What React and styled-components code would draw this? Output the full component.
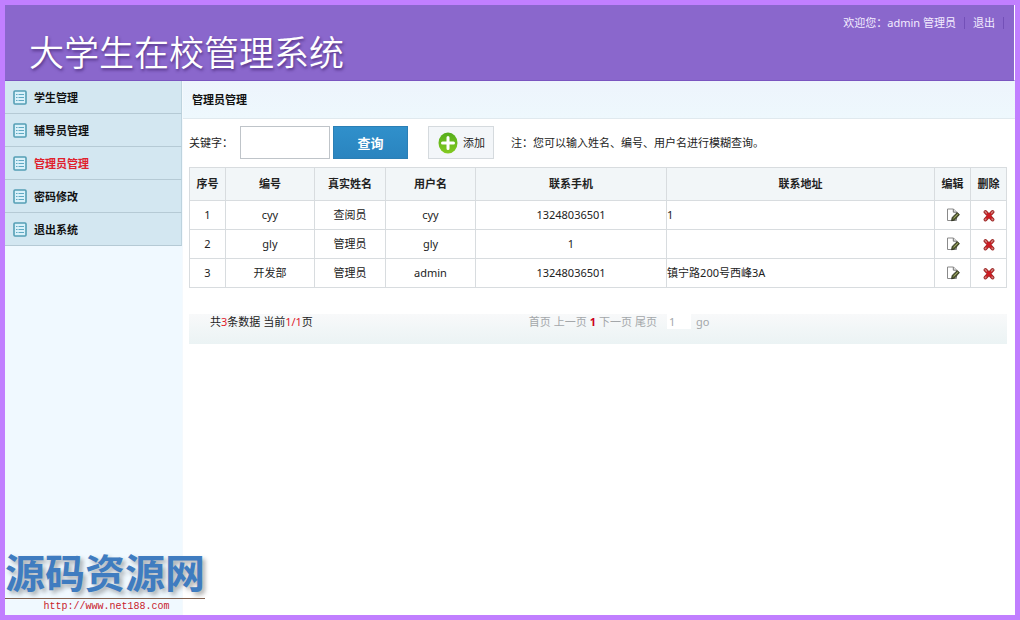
import { useState } from "react";
import styled, { createGlobalStyle } from "styled-components";

const GlobalStyle = createGlobalStyle`
	* {
		box-sizing: border-box;
	}

	body {
		margin: 0;
		background: #ffffff;
		color: #222222;
		font-family: "Noto Sans", "Noto Sans CJK SC", sans-serif;
		font-size: 11px;
		line-height: 16px;
	}

	button,
	input {
		font-family: inherit;
		font-size: inherit;
		line-height: inherit;
	}
`;

const Page = styled.div`
	position: relative;
	display: flex;
	flex-direction: column;
	min-height: 100vh;
	border: 5px solid #c17fff;
`;

const Header = styled.header`
	display: flex;
	justify-content: space-between;
	align-items: flex-start;
	height: 76px;
	padding: 12px 10px 0 24px;
	background: #8a67cc;
	border-right: 1px solid #ffffff;
	border-bottom: 1px solid #7a55c0;
`;

const SiteTitle = styled.h1`
	margin: 8px 0 0;
	color: #ffffff;
	font-family: "Noto Sans CJK SC", sans-serif;
	font-size: 35px;
	font-weight: 350;
	line-height: 52px;
	text-shadow: 1px 2px 3px rgba(50, 20, 90, 0.6);
	white-space: nowrap;
`;

const UserBar = styled.div`
	display: flex;
	align-items: center;
	color: #f3ecff;
	white-space: nowrap;
`;

const UserItem = styled.span`
	padding: 0 8px;
	border-right: 1px solid #7350b8;
	line-height: 12px;

	a {
		color: inherit;
		text-decoration: none;
	}
`;

const Body = styled.div`
	display: flex;
	flex: 1;
`;

const Sidebar = styled.nav`
	flex: 0 0 178px;
	background: #f0f9ff;
	border-right: 1px solid #f4f9fd;
`;

const MenuLink = styled.a`
	display: flex;
	align-items: center;
	gap: 7px;
	height: 33px;
	padding: 1px 8px 0;
	background: #d3e7f1;
	border-right: 1px solid #bdd3de;
	border-bottom: 1px solid #b5cad5;
	color: ${({ $active }) => ($active ? "#e0202c" : "#111111")};
	font-weight: bold;
	text-decoration: none;
`;

const Main = styled.main`
	flex: 1;
	min-width: 0;
`;

const PageTitle = styled.h2`
	margin: 0;
	padding: 11px 9px 10px;
	background: linear-gradient(#edf4fc, #eef8fd);
	border-bottom: 1px solid #e0e9ee;
	color: #111111;
	font-size: 11px;
	font-weight: bold;
`;

const Content = styled.div`
	padding: 7px 8px 0 6px;
`;

const SearchForm = styled.form`
	display: flex;
	align-items: center;
	margin-bottom: 8px;
	white-space: nowrap;

	label {
		width: 51px;
	}
`;

const Keyword = styled.input`
	width: 90px;
	height: 33px;
	margin-right: 3px;
	padding: 0 6px;
	background: #ffffff;
	border: 1px solid #bfc4c9;
	border-radius: 0;
`;

const SearchButton = styled.button`
	width: 75px;
	height: 33px;
	margin-right: 20px;
	padding: 0;
	background: linear-gradient(#3090cb, #2a84bf);
	border: 1px solid #2b7fb5;
	color: #ffffff;
	font-size: 13px;
	font-weight: bold;
`;

const AddButton = styled.button`
	display: flex;
	align-items: center;
	gap: 5px;
	height: 33px;
	margin-right: 17px;
	padding: 0 8px 0 9px;
	background: #f3f6f9;
	border: 1px solid #d5dade;
	color: #222222;
`;

const Table = styled.table`
	width: 100%;
	border-collapse: collapse;
	table-layout: fixed;

	th,
	td {
		height: 29px;
		padding: 0;
		border: 1px solid #d8dcdf;
		text-align: center;
	}

	th {
		height: 33px;
		background: #f2f6f8;
		color: #222222;
		font-weight: bold;
	}

	td.address {
		text-align: left;
	}
`;

const IconButton = styled.button`
	display: block;
	margin: 0 auto;
	padding: 0;
	background: none;
	border: 0;

	svg {
		display: block;
	}
`;

const PagerBar = styled.div`
	display: flex;
	align-items: flex-start;
	height: 30px;
	margin-top: 26px;
	padding-left: 21px;
	background: linear-gradient(#f8f9fa, #ebf3f4);
	white-space: nowrap;
`;

const Summary = styled.div`
	flex: 0 0 40%;

	em {
		color: #e0202c;
		font-style: normal;
	}
`;

const Pager = styled.form`
	display: flex;
	gap: 3px;
	color: #a3a7aa;

	a {
		color: inherit;
		text-decoration: none;
	}

	strong {
		color: #cc0022;
	}

	input {
		width: 24px;
		height: 15px;
		margin: 0 2px 0 7px;
		padding: 0 2px;
		background: #ffffff;
		border: 0;
		color: inherit;
	}

	button {
		padding: 0;
		background: none;
		border: 0;
		color: inherit;
	}
`;

const Watermark = styled.div`
	position: absolute;
	bottom: 0;
	left: 0;
	width: 200px;
	text-align: center;
`;

const WatermarkName = styled.div`
	padding-bottom: 4px;
	border-bottom: 1px solid #80604f;
	color: #3f7cc0;
	font-family: "Noto Sans CJK SC", sans-serif;
	font-size: 40px;
	font-weight: bold;
	line-height: 46px;
	text-shadow: 3px 3px 4px rgba(60, 60, 60, 0.4);
	white-space: nowrap;
`;

const WatermarkUrl = styled.a`
	display: block;
	padding-left: 3px;
	color: #c8202c;
	font-family: "Liberation Mono", monospace;
	font-size: 10px;
	line-height: 16px;
	text-decoration: none;
`;

const menu = ["学生管理", "辅导员管理", "管理员管理", "密码修改", "退出系统"];

const columns = [
	{ title: "序号", width: "4.4%" },
	{ title: "编号", width: "10.9%" },
	{ title: "真实姓名", width: "8.7%" },
	{ title: "用户名", width: "11%" },
	{ title: "联系手机", width: "23.4%" },
	{ title: "联系地址", width: "32.8%" },
	{ title: "编辑", width: "4.4%" },
	{ title: "删除", width: "4.4%" },
];

const admins = [
	{ code: "cyy", name: "查阅员", user: "cyy", phone: "13248036501", address: "1" },
	{ code: "gly", name: "管理员", user: "gly", phone: "1", address: "" },
	{
		code: "开发部",
		name: "管理员",
		user: "admin",
		phone: "13248036501",
		address: "镇宁路200号西峰3A",
	},
];

const ListIcon = () => (
	<svg width="14" height="15" viewBox="0 0 14 15" fill="none">
		<rect x="1" y="1" width="12" height="13" rx="1" fill="#d9f1fa" stroke="#549fb5" strokeWidth="1.6" />
		<path d="M3 4.5h1.5M3 7.5h1.5M3 10.5h1.5M5.5 4.5H11M5.5 7.5H11M5.5 10.5H11" stroke="#5fa9c2" />
	</svg>
);

const AddIcon = () => (
	<svg width="20" height="22" viewBox="0 0 20 22">
		<defs>
			<linearGradient id="addFill" x1="0" y1="0" x2="0" y2="1">
				<stop offset="0" stopColor="#55ad1b" />
				<stop offset="1" stopColor="#83ca20" />
			</linearGradient>
		</defs>
		<ellipse cx="10" cy="11" rx="9.5" ry="10.5" fill="url(#addFill)" />
		<path d="M10 5.5v11M4.5 11h11" stroke="#ffffff" strokeWidth="3" strokeLinecap="round" />
	</svg>
);

const EditIcon = () => (
	<svg width="14" height="14" viewBox="0 0 14 14">
		<path d="M1.5 1h6l3 3v8.5h-9z" fill="#ffffff" stroke="#8a8a8a" />
		<path d="M7.3 1v3.2h3.2" fill="#e4e4e4" stroke="#777777" />
		<path d="M5.6 12.8l.6-3.4L11.2 4.6l2.2 2L8.7 12z" fill="#56602f" stroke="#2e3020" strokeWidth=".9" />
		<path d="M7.6 10.2l4.2-4.1" stroke="#b6bb7d" strokeWidth=".9" />
	</svg>
);

const DeleteIcon = () => (
	<svg width="12" height="13" viewBox="0 0 12 13">
		<path d="M2.5 3l7 7.5M9.5 3l-7 7.5" stroke="#9c2c2a" strokeWidth="3.8" strokeLinecap="round" />
		<path d="M2.7 3.2l6.6 7.1M9.3 3.2l-6.6 7.1" stroke="#cf1b22" strokeWidth="2.2" strokeLinecap="round" />
		<path d="M2.2 2.6l1.3 1.4M9.8 2.6L8.5 4M2.2 10.8l.8-.8M9.8 10.8L9 10" stroke="#c98c88" strokeWidth="1.3" strokeLinecap="round" />
	</svg>
);

function App() {
	const [keyword, setKeyword] = useState("");
	const [pageNo, setPageNo] = useState("1");
	const [active, setActive] = useState("管理员管理");

	return (
		<Page>
			<GlobalStyle />

			<Header>
				<SiteTitle>大学生在校管理系统</SiteTitle>

				<UserBar>
					<UserItem>欢迎您：admin 管理员</UserItem>
					<UserItem>
						<a href="#logout">退出</a>
					</UserItem>
				</UserBar>
			</Header>

			<Body>
				<Sidebar>
					{menu.map((item) => (
						<MenuLink
							key={item}
							href="#menu"
							$active={item === active}
							onClick={() => setActive(item)}
						>
							<ListIcon />
							{item}
						</MenuLink>
					))}
				</Sidebar>

				<Main>
					<PageTitle>管理员管理</PageTitle>

					<Content>
						<SearchForm onSubmit={(e) => e.preventDefault()}>
							<label htmlFor="keyword">关键字：</label>
							<Keyword
								id="keyword"
								value={keyword}
								onChange={(e) => setKeyword(e.target.value)}
							/>
							<SearchButton type="submit">查询</SearchButton>
							<AddButton type="button">
								<AddIcon />
								添加
							</AddButton>
							<span>注：您可以输入姓名、编号、用户名进行模糊查询。</span>
						</SearchForm>

						<Table>
							<colgroup>
								{columns.map((col) => (
									<col key={col.title} width={col.width} />
								))}
							</colgroup>
							<thead>
								<tr>
									{columns.map((col) => (
										<th key={col.title}>{col.title}</th>
									))}
								</tr>
							</thead>
							<tbody>
								{admins.map((row, i) => (
									<tr key={row.code}>
										<td>{i + 1}</td>
										<td>{row.code}</td>
										<td>{row.name}</td>
										<td>{row.user}</td>
										<td>{row.phone}</td>
										<td className="address">{row.address}</td>
										<td>
											<IconButton type="button" aria-label="编辑">
												<EditIcon />
											</IconButton>
										</td>
										<td>
											<IconButton type="button" aria-label="删除">
												<DeleteIcon />
											</IconButton>
										</td>
									</tr>
								))}
							</tbody>
						</Table>

						<PagerBar>
							<Summary>
								共<em>3</em>条数据 当前<em>1/1</em>页
							</Summary>
							<Pager onSubmit={(e) => e.preventDefault()}>
								<a href="#first">首页</a>
								<a href="#prev">上一页</a>
								<strong>1</strong>
								<a href="#next">下一页</a>
								<a href="#last">尾页</a>
								<input
									aria-label="页码"
									value={pageNo}
									onChange={(e) => setPageNo(e.target.value)}
								/>
								<button type="submit">go</button>
							</Pager>
						</PagerBar>
					</Content>
				</Main>
			</Body>

			<Watermark>
				<WatermarkName>源码资源网</WatermarkName>
				<WatermarkUrl href="#home">http://www.net188.com</WatermarkUrl>
			</Watermark>
		</Page>
	);
}

export default App;
